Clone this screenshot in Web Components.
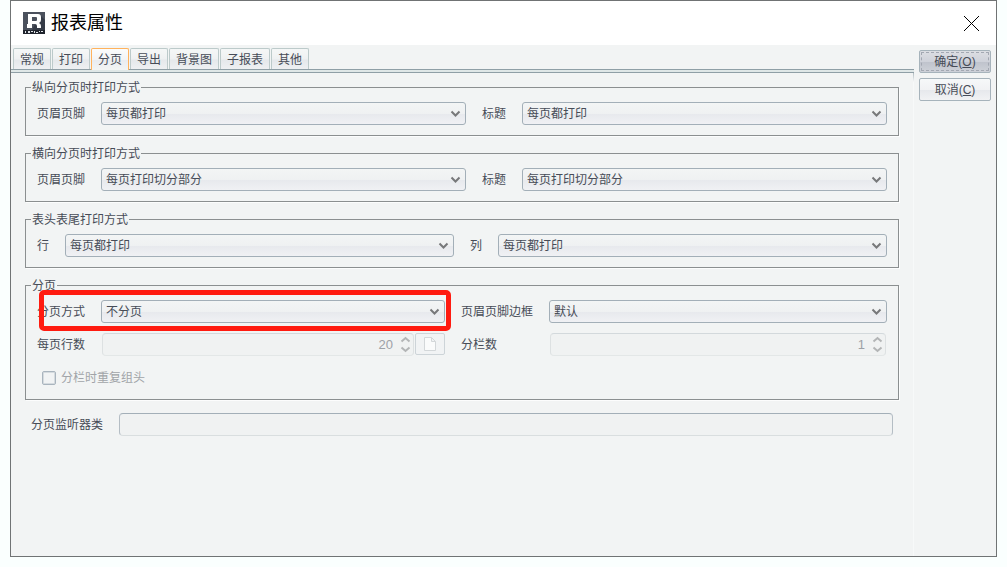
<!DOCTYPE html>
<html lang="zh-CN">
<head>
<meta charset="utf-8">
<title>报表属性</title>
<style>
  body {
    margin: 0 10px 10px;
    background: #fafffe;
    color: #474c57;
    font: 12px/16px "Liberation Sans", "Noto Sans CJK SC", sans-serif;
  }
</style>
</head>
<body>
<rp-dialog heading="报表属性">
  <rp-tabs slot="tabs" labels="常规,打印,分页,导出,背景图,子报表,其他" active="2"></rp-tabs>

  <rp-group heading="纵向分页时打印方式">
    <rp-select label="页眉页脚" options="每页都打印,每页打印切分部分"></rp-select>
    <rp-select label="标题" options="每页都打印,每页打印切分部分"></rp-select>
  </rp-group>
  <rp-group heading="横向分页时打印方式">
    <rp-select label="页眉页脚" options="每页打印切分部分,每页都打印"></rp-select>
    <rp-select label="标题" options="每页打印切分部分,每页都打印"></rp-select>
  </rp-group>
  <rp-group heading="表头表尾打印方式">
    <rp-select label="行" options="每页都打印"></rp-select>
    <rp-select label="列" options="每页都打印"></rp-select>
  </rp-group>
  <rp-group heading="分页" columns>
    <rp-highlight>
      <rp-select label="分页方式" options="不分页"></rp-select>
    </rp-highlight>
    <rp-select label="页眉页脚边框" options="默认"></rp-select>
    <rp-spinner label="每页行数" value="20" picker></rp-spinner>
    <rp-spinner label="分栏数" value="1" style="--label-width: 72px"></rp-spinner>
    <rp-check label="分栏时重复组头"></rp-check>
  </rp-group>
  <rp-text label="分页监听器类"></rp-text>

  <rp-button slot="actions" label="确定" key="O" focused></rp-button>
  <rp-button slot="actions" label="取消" key="C"></rp-button>
</rp-dialog>

<script>
// Styles shared by every labelled field
const fieldStyle = /*css*/ `
  :host {
    display: flex;
    flex: 1 1 auto;
    align-items: center;
    gap: 16px;
    min-width: 0;
  }
  label {
    flex: none;
    min-width: var(--label-width, 0);
    white-space: nowrap;
  }
  .box {
    flex: 1 1 0;
    min-width: 0;
    display: grid;
    align-items: center;
  }
  .box > * {
    grid-area: 1 / 1;
  }
  .box > svg {
    justify-self: end;
    pointer-events: none;
    fill: none;
    stroke-width: 2;
  }
  input, select {
    box-sizing: border-box;
    width: 100%;
    height: 23px;
    margin: 0;
    border: 1px solid #a3afb8;
    border-radius: 3px;
    color: inherit;
    font: inherit;
    outline: none;
  }
`;

/**
 * Dialog window
 */
class RpDialog extends HTMLElement {
  constructor() {
    super();
    this.attachShadow({ mode: 'open' });
  }

  connectedCallback() {
    this.shadowRoot.innerHTML = /*html*/ `
      <style>
        :host {
          display: flex;
          flex-direction: column;
          box-sizing: border-box;
          min-height: calc(100vh - 10px);
          border: 1px solid #707374;
          background: #f2f4f4;
        }
        header {
          display: flex;
          align-items: center;
          gap: 6px;
          height: 44px;
          padding: 0 16px 0 12px;
          background: #fff;
        }
        h1 {
          flex: 1;
          margin: 0;
          color: #000;
          font-size: 18px;
          font-weight: normal;
          line-height: 24px;
        }
        .close {
          display: flex;
          padding: 0;
          border: 0;
          background: none;
        }
        .body {
          flex: 1;
          display: flex;
          gap: 5px;
          padding: 3px 5px 0 0;
        }
        main {
          flex: 1;
          display: flex;
          flex-direction: column;
          min-width: 0;
        }
        .panel {
          flex: 1;
          display: flex;
          flex-direction: column;
          gap: 9px;
          padding: 6px 14px 0;
          border-right: 1px solid;
          border-image: linear-gradient(#a9b5ba, #f7f9f9 10px) 1;
        }
        aside {
          display: flex;
          flex-direction: column;
          gap: 5px;
          width: 72px;
          padding-top: 2px;
        }
      </style>
      <header>
        <svg width="22" height="22" viewBox="0 0 22 22" aria-hidden="true">
          <path fill="#4b515d" d="M0 0h22v18H0z"/>
          <path fill="#353b47" d="M17 3l5 5v10H9z"/>
          <path fill="#fff" fill-rule="evenodd" d="M5 2h10q3 0 3 3v3q0 2-2 3 2 1 2 3v2h-4v-2q0-2-2-2H9v4H4v-4h1zM9 5v4h4q1 0 1-1V6q0-1-1-1z"/>
          <path fill="#20242d" d="M0 18h22v4H0z"/>
          <path fill="#dfe2e6" d="M2 19h1v2H2zM5 19h2v2H5zM8 19h2v1H8zM11 19h1v2h-1zM13 20h2v1h-2zM16 19h1v1h-1zM18 19h2v1h-2z"/>
        </svg>
        <h1>${this.getAttribute('heading')}</h1>
        <button class="close" type="button" aria-label="关闭">
          <svg width="17" height="17" viewBox="0 0 17 17"><path d="M1 1l15 15M16 1L1 16" stroke="#000"/></svg>
        </button>
      </header>
      <div class="body">
        <main>
          <slot name="tabs"></slot>
          <div class="panel"><slot></slot></div>
        </main>
        <aside><slot name="actions"></slot></aside>
      </div>
    `;
  }
}

/**
 * Tab bar
 */
class RpTabs extends HTMLElement {
  constructor() {
    super();
    this.attachShadow({ mode: 'open' });
  }

  connectedCallback() {
    const active = Number(this.getAttribute('active'));
    const tabs = this.getAttribute('labels').split(',').map((label, i) =>
      `<button type="button" role="tab" aria-selected="${i === active}">${label}</button>`
    );
    this.shadowRoot.innerHTML = /*html*/ `
      <style>
        :host {
          display: block;
        }
        .list {
          display: flex;
          gap: 1px;
          padding: 0 2px;
        }
        button {
          box-sizing: border-box;
          height: 21px;
          padding: 2px 6px 0;
          border: 1px solid #bccaca;
          border-bottom: 0;
          border-radius: 2px 2px 0 0;
          background: linear-gradient(#f5f7f7, #eff1f2 50%, #e5e8eb 55%, #eef0f2);
          color: inherit;
          font: inherit;
        }
        button[aria-selected="true"] {
          height: 22px;
          margin-bottom: -1px;
          padding-top: 1px;
          border-color: #ffb25c;
          background: linear-gradient(#fbfcfc, #f3f4f5 50%, #eaecf0 55%, #f2f4f4);
          z-index: 1;
        }
        .line {
          height: 2px;
          border-top: 1px solid #8f9fa6;
          border-bottom: 1px solid #8f9fa6;
          background: #dfe7e7;
        }
      </style>
      <div class="list" role="tablist">${tabs.join('')}</div>
      <div class="line"></div>
    `;
  }
}

/**
 * Titled group of fields
 */
class RpGroup extends HTMLElement {
  constructor() {
    super();
    this.attachShadow({ mode: 'open' });
  }

  connectedCallback() {
    this.shadowRoot.innerHTML = /*html*/ `
      <style>
        :host {
          display: block;
        }
        fieldset {
          min-width: 0;
          margin: 0;
          padding: 6px 11px 10px;
          border: 1px solid #8b8f90;
          box-shadow: 1px 1px #fcfdfd;
        }
        legend {
          margin-left: -6px;
          padding: 2px 1px 0;
          line-height: 15px;
        }
        .rows {
          display: flex;
          gap: 16px;
        }
        :host([columns]) .rows {
          display: grid;
          grid-template-columns: 68fr 71fr;
          gap: 10px 16px;
        }
      </style>
      <fieldset>
        <legend>${this.getAttribute('heading')}</legend>
        <div class="rows"><slot></slot></div>
      </fieldset>
    `;
  }
}

/**
 * Red frame laid over its content
 */
class RpHighlight extends HTMLElement {
  constructor() {
    super();
    this.attachShadow({ mode: 'open' });
    this.shadowRoot.innerHTML = /*html*/ `
      <style>
        :host {
          display: block;
          position: relative;
        }
        .frame {
          position: absolute;
          inset: -10px -6px -8px 2px;
          border: 5px solid #ff1b10;
          border-radius: 5px;
          pointer-events: none;
        }
      </style>
      <slot></slot>
      <div class="frame"></div>
    `;
  }
}

/**
 * Labelled drop-down
 */
class RpSelect extends HTMLElement {
  constructor() {
    super();
    this.attachShadow({ mode: 'open' });
  }

  connectedCallback() {
    const options = this.getAttribute('options').split(',');
    this.shadowRoot.innerHTML = /*html*/ `
      <style>
        ${fieldStyle}
        select {
          appearance: none;
          padding: 0 24px 0 4px;
          background: linear-gradient(#f3f5f5, #eff1f2 50%, #e7e9ed 52%, #f0f1f4);
        }
        svg {
          margin-right: 5px;
          stroke: #77787a;
        }
      </style>
      <label for="field">${this.getAttribute('label')}</label>
      <div class="box">
        <select id="field">${options.map(o => `<option>${o}</option>`).join('')}</select>
        <svg width="11" height="7" viewBox="0 0 11 7"><path d="M1.500 1.500l4 4 4-4"/></svg>
      </div>
    `;
  }
}

/**
 * Labelled number box, with an optional picker button
 */
class RpSpinner extends HTMLElement {
  constructor() {
    super();
    this.attachShadow({ mode: 'open' });
  }

  connectedCallback() {
    const picker = /*html*/ `
      <button type="button" aria-label="选择" disabled>
        <svg width="12" height="14" viewBox="0 0 12 14"><path fill="#fafbfb" stroke="#d3d7d9" d="M.5.5h7l4 4v9H.5zM7.5.5v4h4"/></svg>
      </button>
    `;
    this.shadowRoot.innerHTML = /*html*/ `
      <style>
        ${fieldStyle}
        .control {
          flex: 1;
          display: flex;
          gap: 1px;
          min-width: 0;
          padding-left: 1px;
        }
        :host(:not([picker])) .control {
          padding-right: 1px;
        }
        input {
          appearance: textfield;
          padding: 0 20px 0 4px;
          border-color: #d3d9dc #dde1e2 #e3e7e7;
          border-radius: 4px;
          background: #f0f2f2;
          color: #9da1a7;
          font-size: 13px;
          text-align: right;
        }
        input::-webkit-inner-spin-button {
          display: none;
        }
        .box > svg {
          margin-right: 3px;
          stroke: #b3b5b6;
        }
        button {
          display: flex;
          align-items: center;
          justify-content: center;
          box-sizing: border-box;
          width: 30px;
          height: 22px;
          padding: 0;
          border: 1px solid #cdd4d8;
          border-radius: 2px;
          background: #f1f3f4;
        }
      </style>
      <label for="field">${this.getAttribute('label')}</label>
      <div class="control">
        <div class="box">
          <input id="field" type="number" value="${this.getAttribute('value')}" disabled>
          <svg width="11" height="17" viewBox="0 0 11 17"><path d="M1.500 5.500l4-3.500 4 3.500M1.500 11.500l4 3.500 4-3.500"/></svg>
        </div>
        ${this.hasAttribute('picker') ? picker : ''}
      </div>
    `;
  }
}

/**
 * Tick box, disabled
 */
class RpCheck extends HTMLElement {
  constructor() {
    super();
    this.attachShadow({ mode: 'open' });
  }

  connectedCallback() {
    this.shadowRoot.innerHTML = /*html*/ `
      <style>
        :host {
          display: flex;
          align-items: center;
          gap: 5px;
          height: 23px;
          padding-left: 5px;
          color: #a1a4a8;
        }
        input {
          appearance: none;
          box-sizing: border-box;
          width: 14px;
          height: 14px;
          margin: 0;
          border: 1px solid #a9b4be;
          border-radius: 2px;
          background: #f1f3f4;
          box-shadow: inset 0 0 0 1px #d5dbdf;
        }
      </style>
      <input id="field" type="checkbox" disabled>
      <label for="field">${this.getAttribute('label')}</label>
    `;
  }
}

/**
 * Labelled text box
 */
class RpText extends HTMLElement {
  constructor() {
    super();
    this.attachShadow({ mode: 'open' });
  }

  connectedCallback() {
    this.shadowRoot.innerHTML = /*html*/ `
      <style>
        ${fieldStyle}
        :host {
          flex: none;
          padding: 4px 6px 0;
        }
        input {
          padding: 0 4px;
          border-color: #a3afb8 #b4bdc4 #d9dedf;
          border-radius: 4px;
          background: #f0f2f2;
        }
      </style>
      <label for="field">${this.getAttribute('label')}</label>
      <div class="box"><input id="field" type="text"></div>
    `;
  }
}

/**
 * Push button with an underlined access key
 */
class RpButton extends HTMLElement {
  constructor() {
    super();
    this.attachShadow({ mode: 'open' });
  }

  connectedCallback() {
    this.shadowRoot.innerHTML = /*html*/ `
      <style>
        :host {
          display: block;
        }
        button {
          box-sizing: border-box;
          width: 100%;
          height: 23px;
          padding: 0;
          border: 1px solid #a6b3bb;
          border-radius: 2px;
          background: linear-gradient(#f6f8f9, #f1f2f4 50%, #e6e8ec 52%, #f1f2f4);
          color: inherit;
          font: inherit;
        }
        :host([focused]) button {
          background: linear-gradient(#dcdee3, #cfd2da 50%, #bfc3cc 52%, #ced1d8);
          outline: 1px dashed #a3a8b2;
          outline-offset: -3px;
        }
      </style>
      <button type="button">${this.getAttribute('label')}(<u>${this.getAttribute('key')}</u>)</button>
    `;
  }
}

// Register custom elements
window.customElements.define('rp-dialog', RpDialog);
window.customElements.define('rp-tabs', RpTabs);
window.customElements.define('rp-group', RpGroup);
window.customElements.define('rp-highlight', RpHighlight);
window.customElements.define('rp-select', RpSelect);
window.customElements.define('rp-spinner', RpSpinner);
window.customElements.define('rp-check', RpCheck);
window.customElements.define('rp-text', RpText);
window.customElements.define('rp-button', RpButton);
</script>
</body>
</html>
